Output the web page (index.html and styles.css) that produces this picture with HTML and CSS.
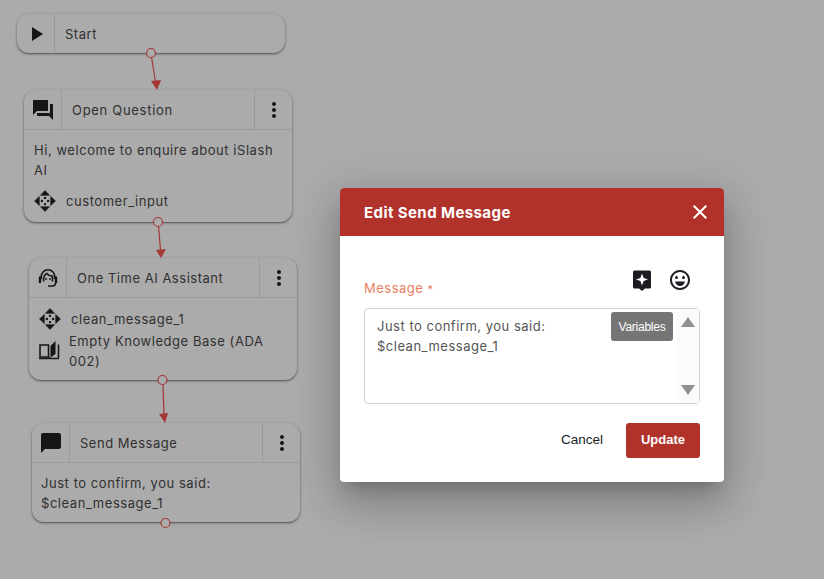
FILE: index.html
```html
<!DOCTYPE html>
<html lang="en">
<head>
  <meta charset="UTF-8" />
  <meta name="viewport" content="width=device-width, initial-scale=1" />
  <title>Flow Editor</title>
  <link rel="stylesheet" href="styles.css">
</head>
<body>
  <svg class="sprite" width="0" height="0">
    <symbol id="more" viewBox="0 0 24 24"><path d="M12 8c1.1 0 2-.9 2-2s-.9-2-2-2-2 .9-2 2 .9 2 2 2zm0 2c-1.1 0-2 .9-2 2s.9 2 2 2 2-.9 2-2-.9-2-2-2zm0 6c-1.1 0-2 .9-2 2s.9 2 2 2 2-.9 2-2-.9-2-2-2z"/></symbol>
    <symbol id="variable" viewBox="0 0 24 24">
      <path d="M12 1.500 16.500 6.300H7.500zM12 22.500 7.500 17.700H16.500zM1.500 12 6.300 7.500V16.500zM22.500 12 17.700 16.500V7.500z" stroke="#222" stroke-width=".6" stroke-linejoin="round"/>
      <circle cx="12" cy="8.900" r="1.200"/><circle cx="12" cy="15.100" r="1.200"/><circle cx="8.900" cy="12" r="1.200"/><circle cx="15.100" cy="12" r="1.200"/>
    </symbol>
  </svg>

  <div class="canvas">
    <svg class="links" width="824" height="579">
      <g class="link">
        <line x1="151.500" y1="57" x2="155.500" y2="82"/>
        <path class="head" d="M151 81 161 80 157 90z"/>
        <circle cx="151" cy="53" r="4.500"/>
      </g>
      <g class="link">
        <line x1="158.500" y1="226" x2="160.500" y2="250"/>
        <path class="head" d="M156 250 166 249 161 258z"/>
        <circle cx="158" cy="222" r="4.500"/>
      </g>
      <g class="link">
        <line x1="163" y1="385" x2="164" y2="414"/>
        <path class="head" d="M159 414 168 413 165 423z"/>
        <circle cx="162.500" cy="380" r="4.500"/>
      </g>
      <g class="link">
        <circle cx="165.500" cy="523" r="4.500"/>
      </g>
    </svg>

    <div class="node node-start">
      <div class="node-head">
        <div class="node-icon"><svg width="24" height="24" viewBox="0 0 24 24"><path d="M8 5v14l11-7z"/></svg></div>
        <div class="node-title">Start</div>
      </div>
    </div>

    <div class="node node-question">
      <div class="node-head">
        <div class="node-icon"><svg width="24" height="24" viewBox="0 0 24 24"><path d="M21 6h-2v9H6v2c0 .55.45 1 1 1h11l4 4V7c0-.55-.45-1-1-1zm-4 6V3c0-.55-.45-1-1-1H3c-.55 0-1 .45-1 1v14l4-4h10c.55 0 1-.45 1-1z"/></svg></div>
        <div class="node-title node-title-wide">Open Question</div>
        <div class="node-menu"><svg width="24" height="24"><use href="#more"/></svg></div>
      </div>
      <div class="node-body">
        <p class="node-text">Hi, welcome to enquire about iSlash AI</p>
        <div class="node-row">
          <svg class="var-icon" width="24" height="24"><use href="#variable"/></svg>
          <span>customer_input</span>
        </div>
      </div>
    </div>

    <div class="node node-assistant">
      <div class="node-head">
        <div class="node-icon">
          <svg class="outline" width="24" height="24" viewBox="0 0 24 24">
            <path d="M5.300 13V10.500a6.700 6.700 0 0 1 13.400 0V13"/>
            <path d="M7.800 15.500c-.8-3.500.6-6.500 3-8 1.600 2 3.800 2.600 5.400 2.500.5 2 .4 3.800 0 5.500"/>
            <path class="thick" d="M4 11.500v4.500M20 11.500v4.500"/>
            <path d="M19.500 16.500c0 2.500-1 3.500-3 3.500H12"/>
            <circle class="dot" cx="10" cy="13" r=".9"/><circle class="dot" cx="14" cy="13" r=".9"/>
          </svg>
        </div>
        <div class="node-title">One Time AI Assistant</div>
        <div class="node-menu"><svg width="24" height="24"><use href="#more"/></svg></div>
      </div>
      <div class="node-body node-body-tight">
        <div class="node-row node-row-first">
          <svg class="var-icon" width="24" height="24"><use href="#variable"/></svg>
          <span>clean_message_1</span>
        </div>
        <div class="node-row node-row-book">
          <svg class="outline book-icon" width="24" height="24" viewBox="2 0 24 24">
            <path d="M3 7h8.500v12H3z"/>
            <path d="M2 20.500h9.500l.8-.8.8.8H22"/>
            <path d="M21.500 6.500v13.500"/>
            <path class="fill" d="M13.500 8 18.500 3v13l-5 3.500z"/>
          </svg>
          <span>Empty Knowledge Base (ADA 002)</span>
        </div>
      </div>
    </div>

    <div class="node node-send">
      <div class="node-head">
        <div class="node-icon"><svg width="24" height="24" viewBox="0 0 24 24"><path d="M20 2H4c-1.100 0-2 .9-2 2v18l4-4h14c1.100 0 2-.9 2-2V4c0-1.100-.9-2-2-2z"/></svg></div>
        <div class="node-title">Send Message</div>
        <div class="node-menu"><svg width="24" height="24"><use href="#more"/></svg></div>
      </div>
      <div class="node-body node-body-send">
        <p class="node-text">Just to confirm, you said:<br>$clean_message_1</p>
      </div>
    </div>
  </div>

  <div class="backdrop"></div>

  <div class="modal-wrap">
    <div class="modal">
      <div class="modal-header">
        <span class="modal-title">Edit Send Message</span>
        <svg class="modal-close" width="24" height="24" viewBox="0 0 24 24"><path d="M19 6.410 17.590 5 12 10.590 6.410 5 5 6.410 10.590 12 5 17.590 6.410 19 12 13.410 17.590 19 19 17.590 13.410 12z"/></svg>
      </div>
      <div class="modal-body">
        <div class="label-row">
          <label class="field-label">Message <span class="required">*</span></label>
          <div class="tool-icons">
            <svg width="24" height="24" viewBox="0 0 24 24">
              <path d="M4.500 2.500h15a1.500 1.500 0 0 1 1.500 1.500v15a1.500 1.500 0 0 1-1.500 1.500H15l-3 2.500-3-2.500H4.500A1.500 1.500 0 0 1 3 19V4a1.500 1.500 0 0 1 1.500-1.500z"/>
              <path class="star" d="M12 5.500 13.600 10 18 11.500 13.600 13 12 17.500 10.400 13 6 11.500 10.400 10z"/>
            </svg>
            <svg width="24" height="24" viewBox="0 0 24 24">
              <path d="M11.990 2C6.470 2 2 6.480 2 12s4.470 10 9.990 10C17.520 22 22 17.520 22 12S17.520 2 11.990 2zM12 20c-4.420 0-8-3.580-8-8s3.580-8 8-8 8 3.580 8 8-3.580 8-8 8z"/>
              <circle cx="8.500" cy="9.500" r="1.500"/><circle cx="15.500" cy="9.500" r="1.500"/>
              <path d="M7 13.500h10c-.6 2.600-2.600 4.500-5 4.500s-4.400-1.900-5-4.500z"/>
            </svg>
          </div>
        </div>
        <div class="message-box">
          <div class="message-text">Just to confirm, you said:<br>$clean_message_1</div>
          <button class="variables-btn">Variables</button>
          <div class="scrollbar">
            <span class="arrow-up"></span>
            <span class="arrow-down"></span>
          </div>
        </div>
        <div class="modal-actions">
          <button class="btn-cancel">Cancel</button>
          <button class="btn-update">Update</button>
        </div>
      </div>
    </div>
  </div>
</body>
</html>
```

FILE: styles.css
```css
html, body {
  margin: 0;
  padding: 0;
  height: 100%;
  overflow: hidden;
}
body {
  font-family: 'Inter', 'Liberation Sans', sans-serif;
  background-color: #fff;
  color: #222;
}
.sprite {
  position: absolute;
}

/* ==== FLOW CANVAS ==== */
.canvas {
  position: relative;
  width: 824px;
  height: 579px;
  background-color: #fff;
}
.links {
  position: absolute;
  left: 0;
  top: 0;
  z-index: 2;
}
.link line {
  stroke: #f5514f;
  stroke-width: 1.200;
}
.link .head {
  fill: #f5514f;
}
.link circle {
  fill: #fff;
  stroke: #f5514f;
  stroke-width: 1.200;
}
.node {
  position: absolute;
  width: 268px;
  background-color: #fff;
  border-radius: 12px;
  box-shadow: 0 1px 3px rgba(0, 0, 0, 0.4), 0 1px 1px rgba(0, 0, 0, 0.2);
  font-size: 13px;
  letter-spacing: 0.55px;
  color: #4a4a4a;
}
.node-start { left: 17px; top: 14px; }
.node-question { left: 24px; top: 90px; }
.node-assistant { left: 29px; top: 258px; }
.node-send { left: 32px; top: 423px; }

.node-head {
  display: flex;
  align-items: stretch;
  height: 39px;
}
.node-question .node-head,
.node-assistant .node-head,
.node-send .node-head {
  border-bottom: 1px solid #e8e8e8;
}
.node-icon {
  width: 37px;
  display: flex;
  align-items: center;
  justify-content: center;
  border-right: 1px solid #e8e8e8;
  flex: none;
}
.node-icon svg, .node-menu svg, .node-row svg {
  fill: #222;
  flex: none;
}
.node-title {
  flex: 1;
  padding: 1px 0 0 10px;
  line-height: 39px;
  letter-spacing: 0.52px;
}
.node-title-wide {
  letter-spacing: 0.7px;
}
.node-menu {
  width: 37px;
  display: flex;
  align-items: center;
  justify-content: center;
  border-left: 1px solid #e8e8e8;
  flex: none;
}
.node-body {
  padding: 10px 10px 0;
}
.node-body-tight {
  padding-top: 9px;
}
.node-body-send {
  padding-left: 9px;
}
.node-text {
  margin: 0 0 9px;
  line-height: 20px;
}
.node-row {
  display: flex;
  align-items: center;
  gap: 8px;
  padding-bottom: 9px;
  min-height: 22px;
}
.node-row .var-icon {
  margin-left: -1px;
  margin-right: 1px;
}
.node-row-first {
  padding-bottom: 0;
}
.node-row-book {
  gap: 6px;
  line-height: 20px;
  padding-bottom: 9px;
}
.book-icon {
  margin-top: -3px;
}
.outline {
  fill: none !important;
  stroke: #222;
  stroke-width: 1.600;
}
.outline .dot, .outline .fill {
  fill: #222;
  stroke: none;
}
.outline .thick {
  stroke-width: 2.400;
  stroke-linecap: round;
}

/* ==== DIM LAYER + DIALOG ==== */
.backdrop {
  position: absolute;
  inset: 0;
  background-color: rgba(0, 0, 0, 0.33);
  z-index: 5;
}
.modal-wrap {
  position: absolute;
  inset: 0;
  z-index: 10;
  padding: 188px 100px 0 340px;
  box-sizing: border-box;
}
.modal {
  background-color: #fff;
  border-radius: 4px;
  overflow: hidden;
  height: 294px;
  box-shadow: 0 11px 15px -7px rgba(0,0,0,0.2), 0 24px 38px 3px rgba(0,0,0,0.14), 0 9px 46px 8px rgba(0,0,0,0.12);
}
.modal-header {
  background-color: #b0322b;
  color: #fff;
  height: 48px;
  display: flex;
  align-items: center;
  justify-content: space-between;
  padding: 0 12px 0 24px;
}
.modal-title {
  font-size: 15px;
  font-weight: 700;
  letter-spacing: 0.42px;
}
.modal-close {
  fill: #fff;
}
.modal-body {
  padding: 32px 24px 0;
}
.label-row {
  display: flex;
  justify-content: space-between;
  align-items: flex-start;
  height: 40px;
}
.field-label {
  font-size: 13px;
  letter-spacing: 0.5px;
  color: #e8805f;
  padding-top: 12px;
}
.required {
  font-size: 11px;
}
.tool-icons {
  display: flex;
  gap: 14px;
  padding-right: 8px;
}
.tool-icons svg {
  fill: #1c1c22;
}
.tool-icons .star {
  fill: #fff;
}
.message-box {
  position: relative;
  height: 94px;
  border: 1px solid #ccd0d8;
  border-radius: 4px;
  box-sizing: content-box;
  width: 334px;
}
.message-text {
  font-size: 13px;
  letter-spacing: 0.5px;
  line-height: 20px;
  color: #555;
  padding: 7px 12px;
}
.variables-btn {
  position: absolute;
  top: 3px;
  right: 26px;
  width: 62px;
  height: 29px;
  background-color: #757575;
  color: #fff;
  border: none;
  border-radius: 3px;
  padding: 0;
  font-family: 'Liberation Sans', sans-serif;
  font-size: 12px;
  letter-spacing: -0.25px;
}
.scrollbar {
  position: absolute;
  top: 0;
  right: 0;
  bottom: 0;
  width: 22px;
  background-color: #fbfbfb;
  display: flex;
  flex-direction: column;
  justify-content: space-between;
  align-items: center;
  padding: 8px 0;
  box-sizing: border-box;
}
.arrow-up, .arrow-down {
  width: 0;
  height: 0;
  border-left: 7px solid transparent;
  border-right: 7px solid transparent;
}
.arrow-up { border-bottom: 10px solid #8f8f8f; }
.arrow-down { border-top: 10px solid #8f8f8f; }
.modal-actions {
  display: flex;
  justify-content: flex-end;
  align-items: center;
  gap: 23px;
  margin-top: 19px;
}
.btn-cancel {
  background: none;
  border: none;
  padding: 0 0 2px;
  font-family: 'Liberation Sans', sans-serif;
  font-size: 13.5px;
  color: #1c1c22;
}
.btn-update {
  width: 74px;
  height: 35px;
  background-color: #b0322b;
  color: #fff;
  border: none;
  border-radius: 3px;
  padding: 0 0 3px;
  font-family: 'Liberation Sans', sans-serif;
  font-size: 13px;
  font-weight: 700;
}
```
